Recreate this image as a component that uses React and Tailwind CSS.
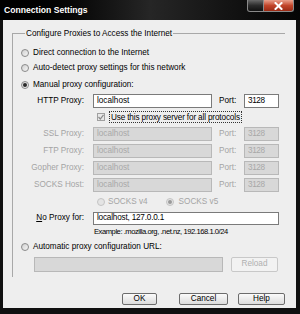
import React from "react";

const font = { fontFamily: '"Liberation Sans", Arial, sans-serif' };

const Radio = ({ checked, disabled }) => (
  <span
    className={`inline-flex items-center justify-center w-[8px] h-[8px] rounded-full border shrink-0 ${
      disabled ? "border-[#c4c4c4] bg-[#e4e4e4]" : "border-[#8a8a8a] bg-gradient-to-br from-[#d0d0d0] to-[#f6f6f6]"
    }`}
  >
    {checked && (
      <span className={`w-[4px] h-[4px] rounded-full ${disabled ? "bg-[#9a9a9a]" : "bg-[#2a2a2a]"}`} />
    )}
  </span>
);

const ProxyRow = ({ label, host, port, disabled, className = "" }) => (
  <div className={`flex items-center h-[14px] ${className}`}>
    <span className={`w-[71px] text-right ${disabled ? "text-[#a4a4a4]" : "text-black"}`}>{label}</span>
    <div
      className={`ml-[9px] w-[119px] h-[14px] border px-[3px] flex items-center ${
        disabled ? "bg-[#d8d8d8] border-[#b8b8b8] text-[#a8a8a8]" : "bg-white border-[#7a7a7a] text-black"
      }`}
    >
      {host}
    </div>
    <span className={`ml-[7px] w-[25px] ${disabled ? "text-[#a4a4a4]" : "text-black"}`}>Port:</span>
    <div
      className={`w-[35px] h-[14px] border px-[3px] flex items-center tracking-[-0.4px] ${
        disabled ? "bg-[#d8d8d8] border-[#b8b8b8] text-[#a8a8a8]" : "bg-white border-[#7a7a7a] text-black"
      }`}
    >
      {port}
    </div>
  </div>
);

const Button = ({ children, className = "" }) => (
  <button
    className={`h-[12px] border border-[#6c6c6c] rounded-[2px] bg-gradient-to-b from-[#fbfbfb] to-[#dcdcdc] text-black leading-none ${className}`}
  >
    {children}
  </button>
);

export default function App() {
  return (
    <div className="w-[300px] h-[314px] bg-[#101010] flex flex-col text-[8.2px] leading-[14px]" style={font}>
      {/* title bar */}
      <div className="h-[20px] flex items-start bg-gradient-to-r from-[#000000] via-[#262626] to-[#050505]">
        <span className="ml-[4px] mt-[4px] text-white font-bold text-[8.6px] leading-[12px]">Connection Settings</span>
        <div className="ml-auto mr-[6px] flex">
          <div className="w-[17px] h-[12px] border border-[#8a8a8a] border-t-0 rounded-bl-[3px] bg-gradient-to-b from-[#6a6a6a] via-[#2c2c2c] to-[#111]" />
          <div className="w-[30px] h-[12px] border border-[#8a8a8a] border-t-0 border-l-0 rounded-br-[3px] bg-gradient-to-b from-[#e9a08c] via-[#c2452a] to-[#9a2a14] flex items-center justify-center">
            <svg width="9" height="8" viewBox="0 0 9 8">
              <path d="M1.5 1 L7.5 7 M7.5 1 L1.5 7" stroke="#ffffff" strokeWidth="2" strokeLinecap="square" />
            </svg>
          </div>
        </div>
      </div>

      {/* body */}
      <div className="flex-1 ml-[3px] mr-[4px] mb-[6px] bg-[#eeeeee] flex flex-col pt-[13px]">
        <div className="ml-[9px] mr-[11px] border-l border-t border-[#a8a8a8] flex flex-col pl-[8px] pb-[5px]">
          <span className="-mt-[7px] ml-[4px] self-start bg-[#eeeeee] px-[1px] h-[14px] text-black">
            Configure Proxies to Access the Internet
          </span>

          <label className="mt-[5px] flex items-center gap-[4px] h-[14px]">
            <Radio />
            <span>Direct connection to the Internet</span>
          </label>
          <label className="mt-[1px] flex items-center gap-[4px] h-[14px]">
            <Radio />
            <span>Auto-detect proxy settings for this network</span>
          </label>
          <label className="mt-[3px] flex items-center gap-[4px] h-[14px]">
            <Radio checked />
            <span>Manual proxy configuration:</span>
          </label>

          <div className="-ml-[8px] flex flex-col">
            <ProxyRow label="HTTP Proxy:" host="localhost" port="3128" className="mt-[2px]" />
            <label className="mt-[2px] flex items-center h-[14px] pl-[84px]">
              <span className="w-[8px] h-[8px] border border-[#a0a0a0] bg-[#e8e8e8] flex items-center justify-center">
                <svg width="6" height="6" viewBox="0 0 6 6">
                  <path d="M0.5 3 L2.3 5 L5.5 0.8" stroke="#8a8a8a" strokeWidth="1.2" fill="none" />
                </svg>
              </span>
              <span className="ml-[4px] px-[1px] h-[12px] leading-[12px] border border-dotted border-[#333] tracking-[-0.15px]">
                Use this proxy server for all protocols
              </span>
            </label>
            <ProxyRow label="SSL Proxy:" host="localhost" port="3128" disabled className="mt-[3px]" />
            <ProxyRow label="FTP Proxy:" host="localhost" port="3128" disabled className="mt-[3px]" />
            <ProxyRow label="Gopher Proxy:" host="localhost" port="3128" disabled className="mt-[3px]" />
            <ProxyRow label="SOCKS Host:" host="localhost" port="3128" disabled className="mt-[3px]" />

            <div className="mt-[3px] flex items-center h-[14px] pl-[84px] text-[#a4a4a4]">
              <Radio disabled />
              <span className="ml-[3px]">SOCKS v4</span>
              <span className="ml-[18px] flex items-center">
                <Radio checked disabled />
                <span className="ml-[5px]">SOCKS v5</span>
              </span>
            </div>

            <div className="mt-[2px] flex items-center h-[14px]">
              <span className="w-[71px] text-right">
                <span className="underline">N</span>o Proxy for:
              </span>
              <div className="ml-[9px] w-[186px] h-[13px] border border-[#7a7a7a] bg-white px-[3px] flex items-center tracking-[-0.2px]">
                localhost, 127.0.0.1
              </div>
            </div>
            <div className="mt-[1px] h-[12px] leading-[12px] pl-[81px] text-[7.6px] tracking-[-0.45px]">
              Example: .mozilla.org, .net.nz, 192.168.1.0/24
            </div>
          </div>

          <label className="mt-[2px] flex items-center gap-[4px] h-[14px]">
            <Radio />
            <span>Automatic proxy configuration URL:</span>
          </label>
          <div className="mt-[3px] flex items-center h-[15px]">
            <div className="ml-[13px] w-[189px] h-[15px] bg-[#d8d8d8] border border-[#b8b8b8]" />
            <button className="ml-[8px] w-[47px] h-[15px] border border-[#c8c8c8] rounded-[2px] bg-[#f2f2f2] text-[#b0b0b0] leading-none">
              Reload
            </button>
          </div>
        </div>

        <div className="mt-[16px] flex justify-end mr-[11px]">
          <Button className="w-[35px]">OK</Button>
          <Button className="ml-[22px] w-[49px]">Cancel</Button>
          <Button className="ml-[10px] w-[47px]">Help</Button>
        </div>
      </div>
    </div>
  );
}
